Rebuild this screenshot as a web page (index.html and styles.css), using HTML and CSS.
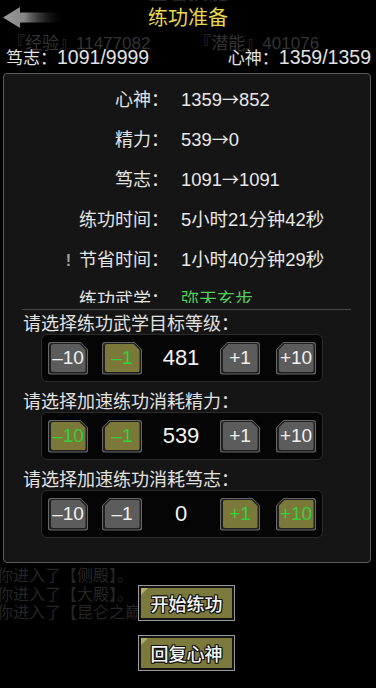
FILE: index.html
```html
<!DOCTYPE html>
<html lang="zh">
<head>
<meta charset="utf-8">
<title>练功准备</title>
<link rel="stylesheet" href="styles.css">
</head>
<body>
<div class="screen">
  <header class="top">
    <div class="back">
      <svg width="62" height="26" viewBox="0 0 62 26">
        <defs>
          <linearGradient id="ag" x1="0" y1="0" x2="1" y2="0">
            <stop offset="0" stop-color="#9a9a9a"/>
            <stop offset="0.35" stop-color="#858585"/>
            <stop offset="1" stop-color="#000" stop-opacity="0"/>
          </linearGradient>
        </defs>
        <path d="M0 12.5 L17 2 L17 7.5 L62 7.5 L62 17.5 L17 17.5 L17 23 Z" fill="url(#ag)"/>
      </svg>
    </div>
    <div class="title-wrap">
      <div class="ghost-title">查看技能</div>
      <h1 class="title">练功准备</h1>
    </div>
    <div></div>
  </header>

  <div class="ghost-stats"><span>『经验』11477082</span><span>『潜能』401076</span></div>
  <div class="stats"><span>笃志：<span class="n">1091/9999</span></span><span>心神：<span class="n">1359/1359</span></span></div>

  <section class="dialog">
    <div class="info">
      <div class="row"><span class="lbl">心神：</span><span class="val">1359<span class="ar">→</span>852</span></div>
      <div class="row"><span class="lbl">精力：</span><span class="val">539<span class="ar">→</span>0</span></div>
      <div class="row"><span class="lbl">笃志：</span><span class="val">1091<span class="ar">→</span>1091</span></div>
      <div class="row"><span class="lbl">练功时间：</span><span class="val">5小时21分钟42秒</span></div>
      <div class="row"><span class="lbl"><span class="warn">!</span>节省时间：</span><span class="val">1小时40分钟29秒</span></div>
      <div class="row"><span class="lbl">练功武学：</span><span class="val green">弥天玄步</span></div>
    </div>
    <div class="sep"></div>

    <div class="pick">
      <div class="pick-label">请选择练功武学目标等级：</div>
      <div class="stepper">
        <span class="step cut-r"><span class="ring"><span class="face">–10</span></span></span>
        <span class="step cut-r on"><span class="ring"><span class="face">–1</span></span></span>
        <span class="num">481</span>
        <span class="step cut-l"><span class="ring"><span class="face">+1</span></span></span>
        <span class="step cut-l"><span class="ring"><span class="face">+10</span></span></span>
      </div>
    </div>

    <div class="pick">
      <div class="pick-label">请选择加速练功消耗精力：</div>
      <div class="stepper">
        <span class="step cut-r on"><span class="ring"><span class="face">–10</span></span></span>
        <span class="step cut-l on"><span class="ring"><span class="face">–1</span></span></span>
        <span class="num">539</span>
        <span class="step cut-r"><span class="ring"><span class="face">+1</span></span></span>
        <span class="step cut-l"><span class="ring"><span class="face">+10</span></span></span>
      </div>
    </div>

    <div class="pick">
      <div class="pick-label">请选择加速练功消耗笃志：</div>
      <div class="stepper">
        <span class="step cut-r"><span class="ring"><span class="face">–10</span></span></span>
        <span class="step cut-l"><span class="ring"><span class="face">–1</span></span></span>
        <span class="num">0</span>
        <span class="step cut-r on"><span class="ring"><span class="face">+1</span></span></span>
        <span class="step cut-l on"><span class="ring"><span class="face">+10</span></span></span>
      </div>
    </div>
  </section>

  <div class="bottom">
    <div class="log">
      <div>你进入了【侧殿】。</div>
      <div>你进入了【大殿】。</div>
      <div>你进入了【昆仑之巅】。</div>
    </div>
    <div class="actions">
      <button class="act">开始练功</button>
      <button class="act">回复心神</button>
    </div>
  </div>
</div>
</body>
</html>
```

FILE: styles.css
```css
* { box-sizing: border-box; }
html, body {
  margin: 0;
  padding: 0;
  background: #000;
}
body {
  font-family: "Liberation Sans", "Noto Sans CJK SC", sans-serif;
  color: #e6e6e6;
}
.screen {
  width: 376px;
  height: 688px;
  overflow: hidden;
  background: #000;
}

/* header */
.top {
  height: 36px;
  display: grid;
  grid-template-columns: 1fr auto 1fr;
  align-items: start;
}
.back {
  padding: 5px 0 0 3px;
}
.back svg { display: block; }
.title-wrap {
  display: grid;
}
.ghost-title, .title {
  grid-area: 1 / 1;
  text-align: center;
}
.ghost-title {
  font-family: "Noto Sans CJK SC", sans-serif;
  font-size: 20px;
  line-height: 34px;
  color: #242424;
  transform: translateY(-25px);
}
.title {
  margin: 0;
  font-family: "Noto Sans CJK SC", sans-serif;
  font-weight: 400;
  font-size: 20px;
  line-height: 34px;
  color: #e8d84c;
}

/* stats */
.ghost-stats {
  height: 12px;
  line-height: 16px;
  font-size: 17px;
  color: #333;
  display: flex;
  gap: 44px;
  padding-left: 8px;
  white-space: nowrap;
}
.stats {
  height: 16px;
  line-height: 18px;
  font-size: 17px;
  color: #e2e2e2;
  display: flex;
  justify-content: space-between;
  padding: 0 5px 0 6px;
  white-space: nowrap;
}
.stats .n { font-size: 19.5px; }

/* dialog */
.dialog {
  margin: 9px 5px 0 3px;
  height: 490px;
  border: 1px solid #5b5b5b;
  border-radius: 4px;
  background: #151515;
}
.info {
  height: 229px;
  overflow: hidden;
  padding-top: 4px;
}
.row {
  height: 40px;
  display: grid;
  grid-template-columns: 165px 1fr;
  align-items: center;
  font-size: 18px;
  white-space: nowrap;
}
.lbl {
  text-align: right;
  color: #e4e4e4;
}
.val {
  padding-left: 12px;
  color: #e8e8e8;
  font-size: 18.4px;
}
.ar {
  font-family: "Noto Sans CJK SC", sans-serif;
  font-size: 17px;
}
.val.green { color: #56cc5c; font-size: 18px; }
.warn {
  color: #a0a0a0;
  font-size: 16px;
  font-weight: bold;
  margin-right: 8px;
}
.sep {
  height: 1px;
  margin: 6px 19px 0 18px;
  background: #474747;
}

.pick {
  padding-left: 19px;
  margin-bottom: 6px;
}
.pick:first-of-type { margin-top: 4px; }
.pick-label {
  font-size: 18px;
  line-height: 24px;
  color: #e2e2e2;
  font-family: "Noto Sans CJK SC", sans-serif;
}
.stepper {
  margin-left: 18px;
  width: 282px;
  height: 48px;
  background: #050505;
  border: 1px solid #2b2b2b;
  border-radius: 6px;
  display: flex;
  align-items: center;
  padding: 0 6px;
}
.stepper .step:nth-child(2) { margin-left: 14px; }
.stepper .step:nth-child(5) { margin-left: 16px; }
.num {
  width: 78px;
  text-align: center;
  font-size: 22px;
  color: #f2f2f2;
}

.step {
  width: 40px;
  height: 33px;
  padding: 1px;
  background: #666;
  display: block;
}
.ring {
  display: block;
  width: 100%;
  height: 100%;
  padding: 1.5px;
  background: #202020;
}
.face {
  display: flex;
  align-items: center;
  justify-content: center;
  width: 100%;
  height: 100%;
  background: #5c5c5c;
  color: #f0f0f0;
  font-size: 19px;
  border-radius: 2px;
}
.step.on .face {
  background: #7a793a;
  color: #36cf3a;
}
.cut-r { clip-path: polygon(0 0, calc(100% - 8px) 0, 100% 8px, 100% 100%, 0 100%); border-radius: 3px; }
.cut-r .ring { clip-path: polygon(0 0, calc(100% - 7px) 0, 100% 7px, 100% 100%, 0 100%); border-radius: 3px; }
.cut-r .face { clip-path: polygon(0 0, calc(100% - 6px) 0, 100% 6px, 100% 100%, 0 100%); }
.cut-l { clip-path: polygon(8px 0, 100% 0, 100% 100%, 0 100%, 0 8px); border-radius: 3px; }
.cut-l .ring { clip-path: polygon(7px 0, 100% 0, 100% 100%, 0 100%, 0 7px); border-radius: 3px; }
.cut-l .face { clip-path: polygon(6px 0, 100% 0, 100% 100%, 0 100%, 0 6px); }

/* bottom */
.bottom {
  display: grid;
}
.log, .actions { grid-area: 1 / 1; }
.log {
  margin-left: -3px;
  padding-top: 2px;
  font-family: "Noto Sans CJK SC", sans-serif;
  font-size: 16px;
  line-height: 18.5px;
  color: #262626;
  white-space: nowrap;
}
.actions {
  padding: 22px 3px 0 0;
  display: flex;
  flex-direction: column;
  align-items: center;
  gap: 14px;
}
.act {
  position: relative;
  width: 97px;
  height: 36px;
  margin: 0;
  padding: 0;
  border: 1px solid #9a9a9a;
  background: #7b7a3c;
  box-shadow: inset 0 0 0 2px #141414;
  font-family: "Noto Sans CJK SC", sans-serif;
  font-size: 18px;
  font-weight: 500;
  color: #f4f4f4;
  text-shadow: -1px -1px 0 #111, 1px -1px 0 #111, -1px 1px 0 #111, 1px 1px 0 #111, 0 1px 0 #111, 0 -1px 0 #111, 1px 0 0 #111, -1px 0 0 #111;
}
.act::before {
  content: "";
  position: absolute;
  left: 2px;
  top: 2px;
  width: 7px;
  height: 7px;
  background: #b0ae66;
  clip-path: polygon(0 0, 100% 0, 0 100%);
}
```
